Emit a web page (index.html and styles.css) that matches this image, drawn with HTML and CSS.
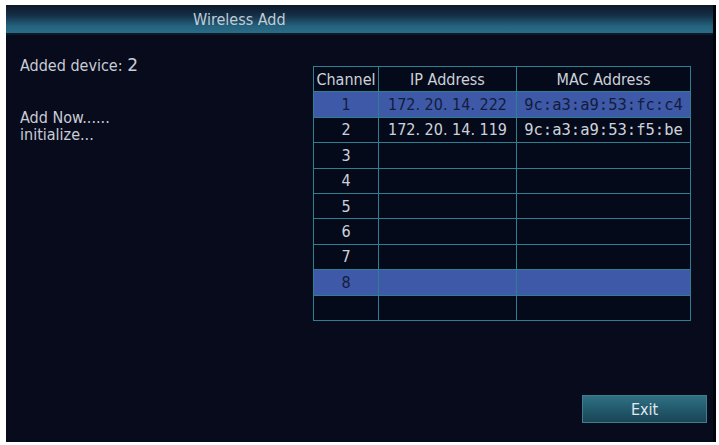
FILE: index.html
```html
<!DOCTYPE html>
<html lang="en">
<head>
  <meta charset="UTF-8" />
  <title>Wireless Add</title>
  <link rel="stylesheet" href="styles.css">
</head>
<body>

  <div class="screen">
    <div class="title-bar">Wireless Add</div>

    <div class="content">
      <div class="status">
        <p class="added">Added device: <span class="num">2</span></p>
        <p>Add Now......</p>
        <p>initialize...</p>
      </div>

      <table class="devices">
        <tr>
          <th class="ch">Channel</th>
          <th class="ip">IP Address</th>
          <th class="mac">MAC Address</th>
        </tr>
        <tr class="selected">
          <td>1</td><td>172. 20. 14. 222</td><td class="mac">9c:a3:a9:53:fc:c4</td>
        </tr>
        <tr>
          <td>2</td><td>172. 20. 14. 119</td><td class="mac">9c:a3:a9:53:f5:be</td>
        </tr>
        <tr><td>3</td><td></td><td></td></tr>
        <tr><td>4</td><td></td><td></td></tr>
        <tr><td>5</td><td></td><td></td></tr>
        <tr><td>6</td><td></td><td></td></tr>
        <tr><td>7</td><td></td><td></td></tr>
        <tr class="selected"><td>8</td><td></td><td></td></tr>
        <tr><td></td><td></td><td></td></tr>
      </table>
    </div>

    <div class="footer">
      <button class="exit">Exit</button>
    </div>
  </div>

</body>
</html>
```

FILE: styles.css
```css
body {
  margin: 0;
  background-color: #fff;
  font-family: 'DejaVu Sans Condensed', 'DejaVu Sans', sans-serif;
  font-stretch: condensed;
  color: #c9cdd6;
}
.screen {
  margin: 5px 0 0 6px;
  width: 707px;
  height: 437px;
  border-right: 3px solid #01030a;
  background-color: #070b1c;
  display: flex;
  flex-direction: column;
}
.title-bar {
  height: 28px;
  line-height: 30px;
  padding-left: 187px;
  font-size: 16px;
  color: #c2ccd5;
  background: linear-gradient(#0d1727 0%, #15324a 40%, #25627d 75%, #2a6c86 100%);
  border-bottom: 2px solid #0c1b2a;
}
.content {
  flex: 1;
  display: flex;
  align-items: flex-start;
  padding: 22px 0 0 14px;
}
.status {
  width: 293px;
  font-size: 16px;
  line-height: 17px;
}
.status p {
  margin: 0;
}
.status .added {
  margin-bottom: 35px;
}
.num {
  font-family: 'DejaVu Sans', sans-serif;
  font-stretch: normal;
  font-size: 17px;
}
.devices {
  margin-top: 9px;
  border-collapse: collapse;
  font-size: 16px;
  background-color: #050a1b;
}
.devices th,
.devices td {
  border: 1px solid #2e7f90;
  height: 24.4px;
  padding: 0;
  text-align: center;
  font-weight: normal;
  color: #cdd2da;
  white-space: nowrap;
}
.devices .ch {
  width: 64px;
}
.devices .ip {
  width: 137px;
}
.devices th.mac {
  width: 173px;
}
.devices td.mac {
  font-family: 'DejaVu Sans Mono', monospace;
  font-stretch: normal;
  font-size: 15.5px;
}
.devices .selected td {
  background-color: #3e59a8;
  color: #141c3c;
}
.footer {
  display: flex;
  justify-content: flex-end;
  padding: 0 6px 19px 0;
}
.exit {
  width: 125px;
  height: 28px;
  font-family: inherit;
  font-size: 16px;
  color: #e3e8ec;
  background: linear-gradient(#2f7184, #22576a 55%, #1a4656);
  border: 1px solid #3d7f8f;
  padding: 0;
  cursor: pointer;
}
```
